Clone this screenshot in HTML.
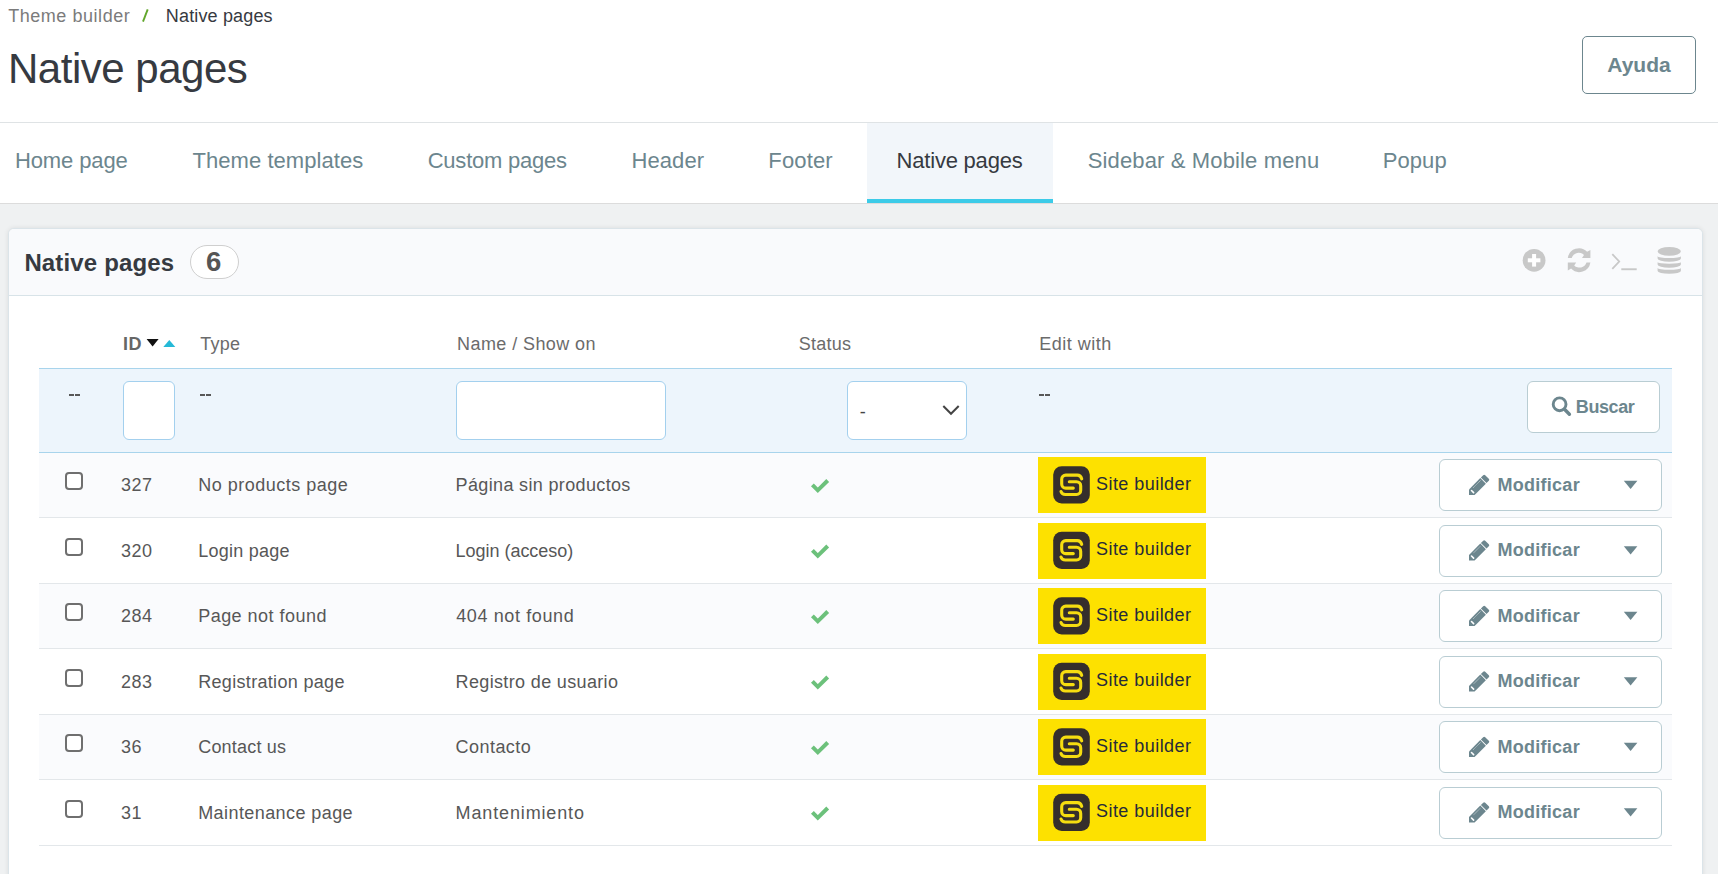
<!DOCTYPE html>
<html><head><meta charset="utf-8"><style>
*{box-sizing:border-box;margin:0;padding:0}
html,body{width:1718px;height:874px;overflow:hidden;background:#eff1f2;font-family:"Liberation Sans",sans-serif}
.a{position:absolute;white-space:nowrap}
svg.a{overflow:visible}
#hdr{position:absolute;left:0;top:0;width:1718px;height:123px;background:#fff;border-bottom:1px solid #dfe3e5}
#tabs{position:absolute;left:0;top:123px;width:1718px;height:81px;background:#fff;border-bottom:1px solid #dcdcdc}
.tab{top:150.3px;font-size:22px;line-height:22px;color:#6c868e}
#acttab{position:absolute;left:867px;top:123px;width:186px;height:80px;background:#f2f6fa;border-bottom:4px solid #3ccbe8}
#panel{position:absolute;left:8px;top:228px;width:1695px;height:700px;background:#fff;border:1px solid #dbe4e9;border-radius:6px;box-shadow:0 0 5px rgba(0,0,0,0.09)}
#phead{position:absolute;left:9px;top:229px;width:1693px;height:67px;background:#f9fafc;border-bottom:1px solid #d8e3e8;border-radius:5px 5px 0 0}
.th{font-size:18px;line-height:18px;letter-spacing:0.5px;color:#6b6b6b}
.td{font-size:18px;line-height:18px;letter-spacing:0.45px;color:#575757}
.rowbg{position:absolute;left:39px;width:1633px}
.cb{position:absolute;left:65px;width:18px;height:18px;border:2px solid #6f6f6f;border-radius:4px;background:#fff}
.sb{position:absolute;left:1038px;width:168px;height:56px;background:#fde100}
.sbt{left:1096px;font-size:18px;line-height:18px;letter-spacing:0.45px;color:#272b3a}
.btn{position:absolute;left:1439px;width:223px;height:52px;border:1px solid #b9cdd3;border-radius:6px;background:#fff}
.btnt{left:1497.4px;font-size:18px;line-height:18px;font-weight:bold;letter-spacing:0.28px;color:#6c868e}
.inp{position:absolute;top:381px;height:59px;border:1px solid #a3d0ee;border-radius:6px;background:#fff}
.dash{font-size:18px;line-height:18px;font-weight:bold;color:#555;letter-spacing:-1px}
</style></head><body>
<div id="hdr"></div><div id="tabs"></div><div id="acttab"></div>
<div class="a" style="left:8.2px;top:7px;font-size:18px;line-height:18px;letter-spacing:0.54px;color:#7b7b7b">Theme builder</div>
<svg class="a" style="left:0;top:0" width="300" height="40"><path d="M143,21.6 L147.7,9.4" stroke="#62a72c" stroke-width="1.9"/></svg>
<div class="a" style="left:165.8px;top:7px;font-size:18px;line-height:18px;letter-spacing:0.16px;color:#363a41">Native pages</div>
<div class="a" style="left:8px;top:47.8px;font-size:42px;line-height:42px;letter-spacing:-0.48px;color:#363a41">Native pages</div>
<div class="a" style="left:1582px;top:36px;width:114px;height:58px;border:1px solid #6c868e;border-radius:5px;text-align:center;font-weight:bold;font-size:21px;line-height:56px;color:#6c868e">Ayuda</div>
<div class="a tab" style="left:14.9px;letter-spacing:-0.1px">Home page</div>
<div class="a tab" style="left:192.5px;letter-spacing:0.05px">Theme templates</div>
<div class="a tab" style="left:427.7px;letter-spacing:-0.22px">Custom pages</div>
<div class="a tab" style="left:631.5px;letter-spacing:0.08px">Header</div>
<div class="a tab" style="left:768.3px;letter-spacing:0.16px">Footer</div>
<div class="a tab" style="left:896.6px;letter-spacing:-0.21px;color:#363a41">Native pages</div>
<div class="a tab" style="left:1087.7px;letter-spacing:0.14px">Sidebar &amp; Mobile menu</div>
<div class="a tab" style="left:1382.8px;letter-spacing:0.05px">Popup</div>
<div id="panel"></div><div id="phead"></div>
<div class="a" style="left:24.4px;top:251px;font-size:24px;line-height:24px;font-weight:bold;letter-spacing:0.15px;color:#363a41">Native pages</div>
<div class="a" style="left:190px;top:245px;width:49px;height:34px;border:1px solid #cfcfcf;border-radius:17px;background:#fff;text-align:center;text-indent:-1.5px;font-size:27.5px;line-height:32px;font-weight:bold;color:#555">6</div>
<svg class="a" style="left:0;top:0" width="1718" height="874">
<circle cx="1534.1" cy="260.3" r="11.4" fill="#c8c8c8"/>
<rect x="1532.1" y="254" width="4" height="12.6" fill="#fff"/><rect x="1527.8" y="258.3" width="12.6" height="4" fill="#fff"/>
<g fill="#c8c8c8">
<path d="M1567.8,257.9 A11.3,11.3 0 0 1 1587.1,251.8 L1590.4,250 L1590.4,257.9 L1582,257.9 L1584,255 A7.4,7.4 0 0 0 1571.7,257.9 Z"/>
<path transform="rotate(180 1579.1 260.2)" d="M1567.8,257.9 A11.3,11.3 0 0 1 1587.1,251.8 L1590.4,250 L1590.4,257.9 L1582,257.9 L1584,255 A7.4,7.4 0 0 0 1571.7,257.9 Z"/>
</g>
<path d="M1612.3,254.2 L1619.2,261.5 L1612.3,268.8" fill="none" stroke="#c8c8c8" stroke-width="1.8"/>
<rect x="1621.3" y="268.3" width="15.4" height="1.9" fill="#c8c8c8"/>
<g fill="#c8c8c8">
<ellipse cx="1669.25" cy="251.35" rx="11.65" ry="4.45"/>
<path d="M1657.6,256.2 A11.65,1.9 0 0 0 1680.9,256.2 L1680.9,258.5 A11.65,3.3 0 0 1 1657.6,258.5 Z"/>
<path d="M1657.6,262.2 A11.65,1.6 0 0 0 1680.9,262.2 L1680.9,264.5 A11.65,3.3 0 0 1 1657.6,264.5 Z"/>
<path d="M1657.6,268.0 A11.65,1.8 0 0 0 1680.9,268.0 L1680.9,270.9 A11.65,2.8 0 0 1 1657.6,270.9 Z"/>
</g>
</svg>
<div class="a th" style="left:123px;top:335px;font-weight:bold;color:#666;letter-spacing:0.6px">ID</div>
<svg class="a" style="left:0;top:0" width="1718" height="874"><path d="M146.6,339 L158.6,339 L152.6,346.4 Z" fill="#111"/><path d="M163.3,347 L175.3,347 L169.3,340 Z" fill="#25b9d7"/></svg>
<div class="a th" style="left:200.3px;top:335px;letter-spacing:0.2px">Type</div>
<div class="a th" style="left:457.1px;top:335px;letter-spacing:0.41px">Name / Show on</div>
<div class="a th" style="left:798.8px;top:335px;letter-spacing:0.22px">Status</div>
<div class="a th" style="left:1039.2px;top:335px;letter-spacing:0.52px">Edit with</div>
<div class="a" style="left:39px;top:368px;width:1633px;height:85px;background:#edf5fc;border-top:1px solid #a8d4ec;border-bottom:1px solid #a8d4ec"></div>
<div class="a" style="left:69px;top:394px;width:5px;height:2px;background:#585858"></div><div class="a" style="left:75px;top:394px;width:5px;height:2px;background:#585858"></div>
<div class="a" style="left:200px;top:394px;width:5px;height:2px;background:#585858"></div><div class="a" style="left:206px;top:394px;width:5px;height:2px;background:#585858"></div>
<div class="a" style="left:1039px;top:394px;width:5px;height:2px;background:#585858"></div><div class="a" style="left:1045px;top:394px;width:5px;height:2px;background:#585858"></div>
<div class="inp" style="left:123px;width:52px"></div>
<div class="inp" style="left:456px;width:210px"></div>
<div class="inp" style="left:847px;width:120px"></div>
<div class="a" style="left:859.7px;top:402.7px;font-size:18px;line-height:18px;color:#444">-</div>
<svg class="a" style="left:0;top:0" width="1718" height="874"><path d="M943.3,406 L951,413.8 L958.7,406" fill="none" stroke="#444" stroke-width="2"/></svg>
<div class="a" style="left:1527px;top:381px;width:133px;height:52px;border:1px solid #b9cdd3;border-radius:6px;background:#fff"></div>
<svg class="a" style="left:0;top:0" width="1718" height="874"><circle cx="1559.6" cy="404.3" r="6.4" fill="none" stroke="#6c868e" stroke-width="2.9"/><path d="M1564.5,409.3 L1569.4,414.2" stroke="#6c868e" stroke-width="3.4" stroke-linecap="round"/></svg>
<div class="a btnt" style="left:1575.8px;top:397.6px;letter-spacing:-0.4px">Buscar</div>
<div class="rowbg" style="top:453px;height:64px;background:#fafbfd"></div>
<div class="rowbg" style="top:517px;height:1px;background:#e3e7ea"></div>
<div class="cb" style="top:472.0px"></div>
<div class="a td" style="left:121px;top:476.0px">327</div>
<div class="a td" style="left:198.2px;top:476.0px;letter-spacing:0.5px">No products page</div>
<div class="a td" style="left:455.6px;top:476.0px;letter-spacing:0.35px">Página sin productos</div>
<div class="sb" style="top:457.0px"></div>
<div class="a sbt" style="top:474.6px">Site builder</div>
<div class="btn" style="top:459.0px"></div>
<div class="a btnt" style="top:475.8px">Modificar</div>
<div class="rowbg" style="top:518px;height:65px;background:#fff"></div>
<div class="rowbg" style="top:583px;height:1px;background:#e3e7ea"></div>
<div class="cb" style="top:537.5px"></div>
<div class="a td" style="left:121px;top:541.5px">320</div>
<div class="a td" style="left:198.2px;top:541.5px;letter-spacing:0.25px">Login page</div>
<div class="a td" style="left:455.6px;top:541.5px;letter-spacing:-0.03px">Login (acceso)</div>
<div class="sb" style="top:522.5px"></div>
<div class="a sbt" style="top:540.1px">Site builder</div>
<div class="btn" style="top:524.5px"></div>
<div class="a btnt" style="top:541.3px">Modificar</div>
<div class="rowbg" style="top:584px;height:64px;background:#fafbfd"></div>
<div class="rowbg" style="top:648px;height:1px;background:#e3e7ea"></div>
<div class="cb" style="top:603.0px"></div>
<div class="a td" style="left:121px;top:607.0px">284</div>
<div class="a td" style="left:198.2px;top:607.0px;letter-spacing:0.47px">Page not found</div>
<div class="a td" style="left:456.2px;top:607.0px;letter-spacing:0.62px">404 not found</div>
<div class="sb" style="top:588.0px"></div>
<div class="a sbt" style="top:605.6px">Site builder</div>
<div class="btn" style="top:590.0px"></div>
<div class="a btnt" style="top:606.8px">Modificar</div>
<div class="rowbg" style="top:649px;height:65px;background:#fff"></div>
<div class="rowbg" style="top:714px;height:1px;background:#e3e7ea"></div>
<div class="cb" style="top:668.5px"></div>
<div class="a td" style="left:121px;top:672.5px">283</div>
<div class="a td" style="left:198.2px;top:672.5px;letter-spacing:0.32px">Registration page</div>
<div class="a td" style="left:455.6px;top:672.5px;letter-spacing:0.35px">Registro de usuario</div>
<div class="sb" style="top:653.5px"></div>
<div class="a sbt" style="top:671.1px">Site builder</div>
<div class="btn" style="top:655.5px"></div>
<div class="a btnt" style="top:672.3px">Modificar</div>
<div class="rowbg" style="top:715px;height:64px;background:#fafbfd"></div>
<div class="rowbg" style="top:779px;height:1px;background:#e3e7ea"></div>
<div class="cb" style="top:734.0px"></div>
<div class="a td" style="left:121px;top:738.0px">36</div>
<div class="a td" style="left:198.2px;top:738.0px;letter-spacing:0.2px">Contact us</div>
<div class="a td" style="left:455.6px;top:738.0px;letter-spacing:0.44px">Contacto</div>
<div class="sb" style="top:719.0px"></div>
<div class="a sbt" style="top:736.6px">Site builder</div>
<div class="btn" style="top:721.0px"></div>
<div class="a btnt" style="top:737.8px">Modificar</div>
<div class="rowbg" style="top:780px;height:65px;background:#fff"></div>
<div class="rowbg" style="top:845px;height:1px;background:#e3e7ea"></div>
<div class="cb" style="top:799.5px"></div>
<div class="a td" style="left:121px;top:803.5px">31</div>
<div class="a td" style="left:198.2px;top:803.5px;letter-spacing:0.42px">Maintenance page</div>
<div class="a td" style="left:455.6px;top:803.5px;letter-spacing:0.86px">Mantenimiento</div>
<div class="sb" style="top:784.5px"></div>
<div class="a sbt" style="top:802.1px">Site builder</div>
<div class="btn" style="top:786.5px"></div>
<div class="a btnt" style="top:803.3px">Modificar</div>
<svg class="a" style="left:0;top:0" width="1718" height="874"><path transform="translate(0,0.0)" d="M812.4,484.9 L817.8,490.3 L827.7,480.5" fill="none" stroke="#6cc17b" stroke-width="4"/><g transform="translate(1053,466.2)"><rect x="0.2" y="0" width="36.6" height="37.4" rx="8.5" fill="#352e2c"/>
<g fill="none" stroke="#f6dd10" stroke-width="3.1" stroke-linecap="round">
<path d="M28.7,12.6 C28.1,10.3 26.5,8.9 24.4,8.9 L12.8,8.9 C10.4,8.9 8.7,10.7 8.7,13 L8.7,17.7 C8.7,20.1 10.4,21.9 12.8,21.9 L20.3,21.9"/>
<path d="M16.3,15.5 L23.5,15.5 C25.9,15.5 27.7,17.3 27.7,19.7 L27.7,24 C27.7,26.4 25.9,28.3 23.5,28.3 L12.3,28.3 C10.2,28.3 8.6,27.1 8.0,25.3"/>
</g></g><g transform="translate(0,0.0)"><path fill="#6c868e" d="M1469,494.9 L1469,489.4 L1480.3,478.1 L1485.9,483.7 L1474.6,494.9 Z"/>
<path fill="#6c868e" d="M1480.9,477.5 L1483.2,475.2 Q1484.2,474.2 1485.2,475.2 L1488.8,478.8 Q1489.8,479.8 1488.8,480.8 L1486.5,483.1 Z"/>
<path d="M1473.4,487.6 L1480.6,480.4" stroke="#fff" stroke-width="0.8" stroke-dasharray="0.9,0.7" opacity="0.85"/>
<path d="M1471.5,490.5 L1473.6,492.6" stroke="#fff" stroke-width="1.6" stroke-linecap="round"/></g><path transform="translate(0,0.0)" d="M1623.8,480.8 L1637.4,480.8 L1630.6,489.1 Z" fill="#6c868e"/><path transform="translate(0,65.5)" d="M812.4,484.9 L817.8,490.3 L827.7,480.5" fill="none" stroke="#6cc17b" stroke-width="4"/><g transform="translate(1053,531.7)"><rect x="0.2" y="0" width="36.6" height="37.4" rx="8.5" fill="#352e2c"/>
<g fill="none" stroke="#f6dd10" stroke-width="3.1" stroke-linecap="round">
<path d="M28.7,12.6 C28.1,10.3 26.5,8.9 24.4,8.9 L12.8,8.9 C10.4,8.9 8.7,10.7 8.7,13 L8.7,17.7 C8.7,20.1 10.4,21.9 12.8,21.9 L20.3,21.9"/>
<path d="M16.3,15.5 L23.5,15.5 C25.9,15.5 27.7,17.3 27.7,19.7 L27.7,24 C27.7,26.4 25.9,28.3 23.5,28.3 L12.3,28.3 C10.2,28.3 8.6,27.1 8.0,25.3"/>
</g></g><g transform="translate(0,65.5)"><path fill="#6c868e" d="M1469,494.9 L1469,489.4 L1480.3,478.1 L1485.9,483.7 L1474.6,494.9 Z"/>
<path fill="#6c868e" d="M1480.9,477.5 L1483.2,475.2 Q1484.2,474.2 1485.2,475.2 L1488.8,478.8 Q1489.8,479.8 1488.8,480.8 L1486.5,483.1 Z"/>
<path d="M1473.4,487.6 L1480.6,480.4" stroke="#fff" stroke-width="0.8" stroke-dasharray="0.9,0.7" opacity="0.85"/>
<path d="M1471.5,490.5 L1473.6,492.6" stroke="#fff" stroke-width="1.6" stroke-linecap="round"/></g><path transform="translate(0,65.5)" d="M1623.8,480.8 L1637.4,480.8 L1630.6,489.1 Z" fill="#6c868e"/><path transform="translate(0,131.0)" d="M812.4,484.9 L817.8,490.3 L827.7,480.5" fill="none" stroke="#6cc17b" stroke-width="4"/><g transform="translate(1053,597.2)"><rect x="0.2" y="0" width="36.6" height="37.4" rx="8.5" fill="#352e2c"/>
<g fill="none" stroke="#f6dd10" stroke-width="3.1" stroke-linecap="round">
<path d="M28.7,12.6 C28.1,10.3 26.5,8.9 24.4,8.9 L12.8,8.9 C10.4,8.9 8.7,10.7 8.7,13 L8.7,17.7 C8.7,20.1 10.4,21.9 12.8,21.9 L20.3,21.9"/>
<path d="M16.3,15.5 L23.5,15.5 C25.9,15.5 27.7,17.3 27.7,19.7 L27.7,24 C27.7,26.4 25.9,28.3 23.5,28.3 L12.3,28.3 C10.2,28.3 8.6,27.1 8.0,25.3"/>
</g></g><g transform="translate(0,131.0)"><path fill="#6c868e" d="M1469,494.9 L1469,489.4 L1480.3,478.1 L1485.9,483.7 L1474.6,494.9 Z"/>
<path fill="#6c868e" d="M1480.9,477.5 L1483.2,475.2 Q1484.2,474.2 1485.2,475.2 L1488.8,478.8 Q1489.8,479.8 1488.8,480.8 L1486.5,483.1 Z"/>
<path d="M1473.4,487.6 L1480.6,480.4" stroke="#fff" stroke-width="0.8" stroke-dasharray="0.9,0.7" opacity="0.85"/>
<path d="M1471.5,490.5 L1473.6,492.6" stroke="#fff" stroke-width="1.6" stroke-linecap="round"/></g><path transform="translate(0,131.0)" d="M1623.8,480.8 L1637.4,480.8 L1630.6,489.1 Z" fill="#6c868e"/><path transform="translate(0,196.5)" d="M812.4,484.9 L817.8,490.3 L827.7,480.5" fill="none" stroke="#6cc17b" stroke-width="4"/><g transform="translate(1053,662.7)"><rect x="0.2" y="0" width="36.6" height="37.4" rx="8.5" fill="#352e2c"/>
<g fill="none" stroke="#f6dd10" stroke-width="3.1" stroke-linecap="round">
<path d="M28.7,12.6 C28.1,10.3 26.5,8.9 24.4,8.9 L12.8,8.9 C10.4,8.9 8.7,10.7 8.7,13 L8.7,17.7 C8.7,20.1 10.4,21.9 12.8,21.9 L20.3,21.9"/>
<path d="M16.3,15.5 L23.5,15.5 C25.9,15.5 27.7,17.3 27.7,19.7 L27.7,24 C27.7,26.4 25.9,28.3 23.5,28.3 L12.3,28.3 C10.2,28.3 8.6,27.1 8.0,25.3"/>
</g></g><g transform="translate(0,196.5)"><path fill="#6c868e" d="M1469,494.9 L1469,489.4 L1480.3,478.1 L1485.9,483.7 L1474.6,494.9 Z"/>
<path fill="#6c868e" d="M1480.9,477.5 L1483.2,475.2 Q1484.2,474.2 1485.2,475.2 L1488.8,478.8 Q1489.8,479.8 1488.8,480.8 L1486.5,483.1 Z"/>
<path d="M1473.4,487.6 L1480.6,480.4" stroke="#fff" stroke-width="0.8" stroke-dasharray="0.9,0.7" opacity="0.85"/>
<path d="M1471.5,490.5 L1473.6,492.6" stroke="#fff" stroke-width="1.6" stroke-linecap="round"/></g><path transform="translate(0,196.5)" d="M1623.8,480.8 L1637.4,480.8 L1630.6,489.1 Z" fill="#6c868e"/><path transform="translate(0,262.0)" d="M812.4,484.9 L817.8,490.3 L827.7,480.5" fill="none" stroke="#6cc17b" stroke-width="4"/><g transform="translate(1053,728.2)"><rect x="0.2" y="0" width="36.6" height="37.4" rx="8.5" fill="#352e2c"/>
<g fill="none" stroke="#f6dd10" stroke-width="3.1" stroke-linecap="round">
<path d="M28.7,12.6 C28.1,10.3 26.5,8.9 24.4,8.9 L12.8,8.9 C10.4,8.9 8.7,10.7 8.7,13 L8.7,17.7 C8.7,20.1 10.4,21.9 12.8,21.9 L20.3,21.9"/>
<path d="M16.3,15.5 L23.5,15.5 C25.9,15.5 27.7,17.3 27.7,19.7 L27.7,24 C27.7,26.4 25.9,28.3 23.5,28.3 L12.3,28.3 C10.2,28.3 8.6,27.1 8.0,25.3"/>
</g></g><g transform="translate(0,262.0)"><path fill="#6c868e" d="M1469,494.9 L1469,489.4 L1480.3,478.1 L1485.9,483.7 L1474.6,494.9 Z"/>
<path fill="#6c868e" d="M1480.9,477.5 L1483.2,475.2 Q1484.2,474.2 1485.2,475.2 L1488.8,478.8 Q1489.8,479.8 1488.8,480.8 L1486.5,483.1 Z"/>
<path d="M1473.4,487.6 L1480.6,480.4" stroke="#fff" stroke-width="0.8" stroke-dasharray="0.9,0.7" opacity="0.85"/>
<path d="M1471.5,490.5 L1473.6,492.6" stroke="#fff" stroke-width="1.6" stroke-linecap="round"/></g><path transform="translate(0,262.0)" d="M1623.8,480.8 L1637.4,480.8 L1630.6,489.1 Z" fill="#6c868e"/><path transform="translate(0,327.5)" d="M812.4,484.9 L817.8,490.3 L827.7,480.5" fill="none" stroke="#6cc17b" stroke-width="4"/><g transform="translate(1053,793.7)"><rect x="0.2" y="0" width="36.6" height="37.4" rx="8.5" fill="#352e2c"/>
<g fill="none" stroke="#f6dd10" stroke-width="3.1" stroke-linecap="round">
<path d="M28.7,12.6 C28.1,10.3 26.5,8.9 24.4,8.9 L12.8,8.9 C10.4,8.9 8.7,10.7 8.7,13 L8.7,17.7 C8.7,20.1 10.4,21.9 12.8,21.9 L20.3,21.9"/>
<path d="M16.3,15.5 L23.5,15.5 C25.9,15.5 27.7,17.3 27.7,19.7 L27.7,24 C27.7,26.4 25.9,28.3 23.5,28.3 L12.3,28.3 C10.2,28.3 8.6,27.1 8.0,25.3"/>
</g></g><g transform="translate(0,327.5)"><path fill="#6c868e" d="M1469,494.9 L1469,489.4 L1480.3,478.1 L1485.9,483.7 L1474.6,494.9 Z"/>
<path fill="#6c868e" d="M1480.9,477.5 L1483.2,475.2 Q1484.2,474.2 1485.2,475.2 L1488.8,478.8 Q1489.8,479.8 1488.8,480.8 L1486.5,483.1 Z"/>
<path d="M1473.4,487.6 L1480.6,480.4" stroke="#fff" stroke-width="0.8" stroke-dasharray="0.9,0.7" opacity="0.85"/>
<path d="M1471.5,490.5 L1473.6,492.6" stroke="#fff" stroke-width="1.6" stroke-linecap="round"/></g><path transform="translate(0,327.5)" d="M1623.8,480.8 L1637.4,480.8 L1630.6,489.1 Z" fill="#6c868e"/></svg>
</body></html>
